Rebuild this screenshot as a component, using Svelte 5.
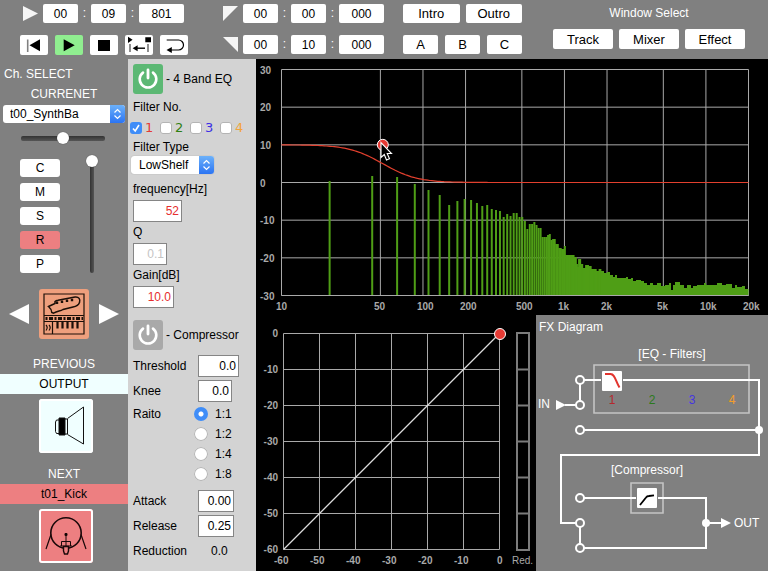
<script>
  let eqOn = $state(true);
  let compOn = $state(false);
  let ratio = $state('1:1');

  const filters = [
    { n: 1, color: '#e53a34', dim: '#b5282c', on: true },
    { n: 2, color: '#2f8012', dim: '#2c7a1c', on: false },
    { n: 3, color: '#3c2fe6', dim: '#4636e0', on: false },
    { n: 4, color: '#f2a43a', dim: '#f29d2a', on: false }
  ];
  const channelKeys = ['C', 'M', 'S', 'R', 'P'];
  const ratios = ['1:1', '1:2', '1:4', '1:8'];

  // EQ plot geometry: logarithmic frequency axis, linear dB axis
  const L = 25.5, R = 492.5, T = 10.5, B = 236.5;
  const fx = (f) => L + ((R - L) * Math.log10(f / 10)) / Math.log10(2000);
  const dy = (db) => T + ((30 - db) * (B - T)) / 60;
  const freqs = [
    [10, '10'], [50, '50'], [100, '100'], [200, '200'], [500, '500'],
    [1000, '1k'], [2000, '2k'], [5000, '5k'], [10000, '10k'], [20000, '20k']
  ];
  const dbs = [30, 20, 10, 0, -10, -20, -30];

  // Low shelf response
  function shelf(f, f0 = 52, gain = 10) {
    const A = Math.pow(10, gain / 40);
    const w = f / f0;
    const m = Math.pow((Math.sqrt(A) / 0.7071) * w, 2);
    const num = Math.pow(A - w * w, 2) + m;
    const den = Math.pow(1 - A * w * w, 2) + m;
    return 20 * Math.log10(A) + 10 * Math.log10(num / den);
  }
  let curve = '';
  for (let i = 0; i <= 230; i++) {
    const f = 10 * Math.pow(2000, i / 230);
    curve += (i ? 'L' : 'M') + fx(f).toFixed(1) + ' ' + dy(shelf(f)).toFixed(1);
  }

  // Spectrum: the first bins one by one, then an envelope of [x, top]
  const low = [122, 117, 118, 125, 131, 136, 146, 142, 140, 141, 144, 147, 146, 150, 151, 152, 158, 155, 157, 154, 154, 158];
  const envelope = [
    [263, 158], [266, 158], [268, 162], [271, 170], [273, 165], [276, 165], [278, 163], [280, 166], [283, 169],
    [286, 178], [289, 178], [291, 176], [293, 175], [295, 181], [298, 180], [300, 185], [303, 189], [306, 190],
    [308, 187], [311, 196], [316, 196], [318, 198], [320, 205], [321, 208], [323, 200], [325, 205], [328, 209],
    [330, 206], [333, 207], [336, 210], [338, 210], [341, 212], [343, 210], [347, 212], [350, 214], [353, 213],
    [356, 216], [358, 218], [360, 216], [364, 219], [369, 219], [371, 218], [374, 220], [376, 219], [379, 222],
    [384, 221], [387, 222], [390, 224], [393, 226], [396, 224], [400, 226], [404, 224], [408, 227], [412, 226],
    [414, 224], [416, 231], [418, 226], [423, 223], [427, 226], [430, 229], [434, 226], [436, 229], [440, 227],
    [444, 226], [447, 226], [449, 224], [452, 226], [457, 226], [460, 226], [465, 224], [469, 226], [475, 225],
    [478, 229], [480, 226], [485, 228], [488, 227], [491, 230], [494, 230]
  ];
  const bars = [];
  for (let k = 1; ; k++) {
    const x = fx(21.53 * k);
    if (x > 345) break;
    const e = envelope.find((p) => p[0] >= x - 1);
    bars.push([x, k <= low.length ? low[k - 1] : e[1]]);
  }
  let dense = `M345 ${B}`;
  for (const [x, t] of envelope) {
    if (x < 345) continue;
    dense += `V${t}H${Math.min(x + 1, R)}`;
  }
  dense += `V${B}Z`;

  const steps = [0, 1, 2, 3, 4, 5, 6];
</script>

{#snippet time(name, parts)}
  <div class="time">
    {#each parts as p, i}
      {#if i}<span>:</span>{/if}
      <input type="text" class:wide={i === 2} value={p} aria-label={`${name} ${i + 1}`} />
    {/each}
  </div>
{/snippet}

{#snippet cap()}
  <svg class="cap" width="15" height="18" viewBox="0 0 15 18" aria-hidden="true">
    <defs>
      <linearGradient id="blue" x1="0" y1="0" x2="0" y2="1">
        <stop offset="0" stop-color="#6cb1fa" />
        <stop offset="1" stop-color="#2b74f3" />
      </linearGradient>
    </defs>
    <path d="M0 0H12a3 3 0 0 1 3 3V15a3 3 0 0 1-3 3H0Z" fill="url(#blue)" />
    <path d="M4.500 7.500 7.500 4.500 10.500 7.500M4.500 10.500 7.500 13.500 10.500 10.500" fill="none" stroke="#fff" stroke-width="1.200" />
  </svg>
{/snippet}

{#snippet power()}
  <svg width="30" height="30" viewBox="0 0 30 30" aria-hidden="true">
    <path d="M10 8.600A8.300 8.300 0 1 0 20 8.600" fill="none" stroke="#fff" stroke-width="2.600" stroke-linecap="round" />
    <path d="M15 6V14" stroke="#fff" stroke-width="2.800" stroke-linecap="round" />
  </svg>
{/snippet}

<div class="app">
  <header>
    <section class="group transport">
      <div class="row">
        <svg class="lead" width="15" height="15" viewBox="0 0 15 15" aria-hidden="true"><path d="M0 0 15 7.500 0 15Z" fill="#f5f5f5" /></svg>
        {@render time('Position', ['00', '09', '801'])}
      </div>
      <div class="row keys">
        <button aria-label="Rewind">
          <svg width="28" height="20" viewBox="0 0 28 20"><path d="M7.700 4.500V17" stroke="#808080" stroke-width="1.600" /><path d="M20 4.300V16.300L9.500 10.300Z" /></svg>
        </button>
        <button class="playing" aria-label="Play">
          <svg width="28" height="20" viewBox="0 0 28 20"><path d="M8.700 4.300 19.700 10.300 8.700 16.300Z" /></svg>
        </button>
        <button aria-label="Stop">
          <svg width="28" height="20" viewBox="0 0 28 20"><path d="M8 5H20V16H8Z" /></svg>
        </button>
        <button aria-label="Return to start">
          <svg width="28" height="20" viewBox="0 0 28 20">
            <path d="M3 1.800 7.600 4.800 3 8ZM20.300 2.300H26V7.300H20.300Z" />
            <path d="M5 9V17M23 9V17" stroke="#606060" stroke-width="1.400" />
            <path d="M11 13.200H20" stroke="#000" stroke-width="1.400" /><path d="M7.600 13.200 12.600 10.200V16.200Z" />
          </svg>
        </button>
        <button aria-label="Loop">
          <svg width="28" height="20" viewBox="0 0 28 20">
            <path d="M6.700 5H18.500A5 5 0 0 1 18.500 15H10" fill="none" stroke="#000" stroke-width="1.200" /><path d="M6.500 15 11.800 12V18Z" />
          </svg>
        </button>
      </div>
    </section>

    <section class="group range">
      <div class="row">
        <svg width="15" height="15" viewBox="0 0 15 15" aria-hidden="true"><path d="M0 0H15L0 15Z" fill="#f5f5f5" /></svg>
        {@render time('Start', ['00', '00', '000'])}
      </div>
      <div class="row">
        <svg width="15" height="15" viewBox="0 0 15 15" aria-hidden="true"><path d="M0 0H15V15Z" fill="#f5f5f5" /></svg>
        {@render time('End', ['00', '10', '000'])}
      </div>
    </section>

    <section class="group marks">
      <div class="row two"><button>Intro</button><button>Outro</button></div>
      <div class="row three"><button>A</button><button>B</button><button>C</button></div>
    </section>

    <section class="windows">
      <h2>Window Select</h2>
      <nav><button>Track</button><button>Mixer</button><button>Effect</button></nav>
    </section>
  </header>

  <main>
    <aside class="channel">
      <h2>Ch. SELECT</h2>
      <label class="current" for="ch">CURRENET</label>
      <div class="select ch">
        <select id="ch"><option>t00_SynthBa</option></select>
        {@render cap()}
      </div>
      <input class="pan" type="range" min="0" max="100" value="50" aria-label="Pan" />
      <div class="strip">
        <div class="letters">
          {#each channelKeys as k}
            <button class:rec={k === 'R'}>{k}</button>
          {/each}
        </div>
        <input class="fader" type="range" min="0" max="100" value="100" aria-label="Volume" />
      </div>
      <div class="picker">
        <button class="arrow" aria-label="Previous channel"><svg width="20" height="20" viewBox="0 0 20 20"><path d="M20 0V20L0 10Z" fill="#fff" /></svg></button>
        <button class="synth" aria-label="Channel icon">
          <svg width="50" height="50" viewBox="0 0 50 50" fill="none" stroke="#1c0f08" stroke-width="1.200">
            <path d="M5 5H45V45H5ZM5 26.500H45M5 32.500H45M13.500 32.500V45" />
            <path d="M9.500 17.500L16 14.500V12.500Q17 11.500 19 11.200L36 8C40 7.500 41.500 10.500 40.500 13.500C39.500 16.500 37 17.500 34 18L24 20.500C21 22.500 19 21.500 14.500 24.200L12.800 23.500Q12.500 20 9.500 17.500Z" stroke-width="1.500" />
            <path d="M18 12.500V15M23 11.500V14M28 10.500V13M33 9.800V12.300" stroke-width="2.400" />
            <path d="M6.500 29.500H44" stroke-width="3" stroke-dasharray="2 1.500 4 1.500" />
            <path d="M18.500 33V39.500M23.500 33V39.500M28.500 33V39.500M33.500 33V39.500M38.500 33V39.500" stroke-width="2.200" />
            <path d="M7 36C8.500 37.500 8.500 39.500 7 41.500M10 36C11.500 37.500 11.500 39.500 10 41.500" />
          </svg>
        </button>
        <button class="arrow" aria-label="Next channel"><svg width="20" height="20" viewBox="0 0 20 20"><path d="M0 0 20 10 0 20Z" fill="#fff" /></svg></button>
      </div>
      <h3 class="prev">PREVIOUS</h3>
      <p class="band out">OUTPUT</p>
      <button class="tile out" aria-label="Go to OUTPUT">
        <svg width="54" height="54" viewBox="0 0 54 54" fill="none" stroke="#111" stroke-width="1">
          <path d="M20 19H26V36H20Z" fill="#000" />
          <path d="M20 21H17.500L16.500 23V32.500L17.500 34.500H20M26 20H28.500V35H26" />
          <path d="M28.500 19.500 44.500 8V45L28.500 35.500" />
        </svg>
      </button>
      <h3 class="next">NEXT</h3>
      <p class="band kick">t01_Kick</p>
      <button class="tile kick" aria-label="Go to t01_Kick">
        <svg width="54" height="54" viewBox="0 0 54 54" fill="none" stroke="#1a0809" stroke-width="1">
          <circle cx="27" cy="24" r="15.200" stroke-width="1.600" />
          <path d="M12 25.500 7 40M42 25.500 47 40" stroke-width="1.200" />
          <path d="M26 24.500H28V26.500H26Z" fill="#000" />
          <path d="M27 27V37M22.500 32.500H31.500V37M22.500 32.500V37M21 37H33" />
          <path d="M24.500 37.500H29.500V42L28.500 45H25.500L24.500 42Z" stroke-width="1.400" fill="#ed7f81" />
        </svg>
      </button>
    </aside>

    <section class="effects">
      <div class="title">
        <button class:on={eqOn} onclick={() => (eqOn = !eqOn)} aria-label="4 Band EQ power">{@render power()}</button>
        <h2>- 4 Band EQ</h2>
      </div>
      <fieldset class="filters">
        <legend>Filter No.</legend>
        {#each filters as f}
          <label style:color={f.color}><input type="checkbox" checked={f.on} />{f.n}</label>
        {/each}
      </fieldset>
      <label class="type" for="ftype">Filter Type</label>
      <div class="select ft">
        <select id="ftype"><option>LowShelf</option></select>
        {@render cap()}
      </div>
      <div class="stack">
        <label for="freq">frequency[Hz]</label>
        <input id="freq" class="num w49 red" type="text" value="52" />
        <label for="q">Q</label>
        <input id="q" class="num w34" type="text" value="0.1" disabled />
        <label for="gain">Gain[dB]</label>
        <input id="gain" class="num w41 red" type="text" value="10.0" />
      </div>

      <div class="title comp">
        <button class:on={compOn} onclick={() => (compOn = !compOn)} aria-label="Compressor power">{@render power()}</button>
        <h2>- Compressor</h2>
      </div>
      <div class="params">
        <div class="param"><label for="thr">Threshold</label><input id="thr" class="num w41" type="text" value="0.0" /></div>
        <div class="param"><label for="knee">Knee</label><input id="knee" class="num w34" type="text" value="0.0" /></div>
        <div class="ratio" role="radiogroup" aria-labelledby="ratio-name">
          <span id="ratio-name">Raito</span>
          <div>
            {#each ratios as r}
              <label><input type="radio" name="ratio" value={r} bind:group={ratio} />{r}</label>
            {/each}
          </div>
        </div>
        <div class="param"><label for="att">Attack</label><input id="att" class="num w36" type="text" value="0.00" /></div>
        <div class="param"><label for="rel">Release</label><input id="rel" class="num w36" type="text" value="0.25" /></div>
        <div class="param"><span>Reduction</span><output>0.0</output></div>
      </div>
    </section>

    <section class="graphs">
      <svg class="eq" viewBox="0 0 512 256" role="img" aria-label="Equalizer response">
        <g stroke="#a9a9a9">
          {#each dbs as d}<path d={`M${L} ${dy(d)}H${R}`} />{/each}
          {#each freqs as [f]}<path d={`M${fx(f)} ${T}V${B}`} />{/each}
        </g>
        <g fill="#4f9e16">
          {#each bars as [x, t]}<rect {x} y={t} width="2" height={B - t} />{/each}
          <path d={dense} />
        </g>
        <path d={`M${L} ${B}H${R}`} stroke="#a9a9a9" />
        <path d={curve} fill="none" stroke="#e2402e" stroke-width="1.200" />
        <g class="axis">
          {#each dbs as d}<text x="4" y={Math.round(dy(d)) + 4}>{d}</text>{/each}
          {#each freqs as [f, name]}<text x={Math.round(fx(f) - 6)} y="251">{name}</text>{/each}
        </g>
        <circle cx={fx(52)} cy={dy(10)} r="5.500" fill="#e53a34" stroke="#fff" />
        <path d="M125 83.500V98.500L128.300 95.500 130.500 101 133.500 99.800 131.200 94.500H135.500Z" fill="#000" stroke="#fff" stroke-width="1.100" />
      </svg>
      <div class="lower">
        <svg class="compgraph" viewBox="0 0 280 256" role="img" aria-label="Compressor curve">
          <g stroke="#a9a9a9" fill="none">
            {#each steps as i}
              <path d={`M27.5 ${18.5 + 36 * i}H243.5M${27.5 + 36 * i} 18.5V234.5`} />
            {/each}
            <g stroke="#7c7c7c" stroke-width="2">
              <path d="M261 18H273V235H261Z" />
              {#each [1, 2, 3, 4, 5] as i}<path d={`M261 ${18.5 + 36 * i}H273`} />{/each}
            </g>
          </g>
          <path d="M27.500 234.500 243.500 18.500" stroke="#dcdcdc" stroke-width="1.300" />
          <g class="axis">
            {#each steps as i}
              <text x="22" y={22 + 36 * i} text-anchor="end">{i ? -10 * i : 0}</text>
              <text x={i === 6 ? 241 : 18 + 36 * i} y="249">{i === 6 ? 0 : -60 + 10 * i}</text>
            {/each}
          </g>
          <text class="red-label" x="256" y="249">Red.</text>
          <circle cx="244" cy="19" r="5.500" fill="#e53a34" stroke="#fff" />
        </svg>
        <svg class="fx" viewBox="0 0 232 256" role="img" aria-label="FX Diagram">
          <text x="3" y="16">FX Diagram</text>
          <text x="136" y="43" text-anchor="middle">[EQ - Filters]</text>
          <text x="111" y="159" text-anchor="middle">[Compressor]</text>
          <text x="2" y="93">IN</text>
          <text x="198" y="212">OUT</text>
          <g fill="none" stroke="#c4c4c4" stroke-width="1.600">
            <path d="M58 50H213V98H58Z" />
            <path d="M95 168H127V198H95Z" />
          </g>
          <g fill="none" stroke="#fff" stroke-width="2">
            <path d="M44 65H65M87 65H223V140H25V208H44M44 65V90M29 90H44M44 115H223" />
            <path d="M44 183H100M122 183H170V233H44V208M170 208H186" />
            <g fill="#808080">
              {#each [65, 90, 115, 183, 208, 233] as y}<circle cx="44" cy={y} r="4" />{/each}
            </g>
          </g>
          <g fill="#fff">
            <circle cx="223" cy="115" r="4" /><circle cx="170" cy="208" r="4" />
            <path d="M20 85 30 90 20 95ZM185 203 195 208 185 213Z" />
            <rect x="66" y="56" width="20" height="20" rx="1" />
            <rect x="101" y="173" width="20" height="20" rx="1" />
          </g>
          <path d="M69 59H74.500C79 59 79.500 66 83.500 72.500" fill="none" stroke="#e2352f" stroke-width="2" />
          <path d="M104 190 110 182.500Q111 181 113 181L118 180.300" fill="none" stroke="#000" stroke-width="1.800" />
          {#each filters as f, i}
            <text x={76 + 40 * i} y="89" text-anchor="middle" fill={f.dim}>{f.n}</text>
          {/each}
        </svg>
      </div>
    </section>
  </main>
</div>

<style>
  :global(body) { margin: 0; background: #808080; }
  .app { font: 12px/20px "Liberation Sans", Arial, Helvetica, sans-serif; color: #000; min-height: 100vh; display: flex; flex-direction: column; }
  h2, h3, p { margin: 0; font-size: 12px; font-weight: 400; line-height: 20px; }
  button, input, select { font: inherit; color: inherit; margin: 0; padding: 0; border: 0; box-sizing: border-box; }
  button { cursor: pointer; }
  svg { display: block; }

  header { display: flex; align-items: flex-start; background: #808080; padding: 4px 20px; color: #fff; }
  .group { display: flex; flex-direction: column; gap: 12px; }
  .row { display: flex; align-items: center; gap: 5px; height: 19px; }
  .lead { margin-left: 3px; }
  .time { display: flex; align-items: center; }
  .time span { width: 13px; text-align: center; line-height: 19px; }
  .time input { width: 35px; height: 19px; border-radius: 2px; background: #fff; color: #000; text-align: center; }
  .time input.wide { width: 45px; }
  header button { background: #fff; color: #000; border-radius: 2px; font-size: 13px; line-height: 19px; }
  .keys { gap: 7px; height: 20px; }
  .keys button { width: 28px; height: 20px; }
  .keys .playing { background: #90ee90; }
  .range { margin-left: 35px; }
  .marks { margin-left: 19px; width: 119px; }
  .two { gap: 6px; }
  .two button { flex: 1; }
  .three { gap: 7px; }
  .three button { flex: 1; }
  .windows { margin-left: 31px; text-align: center; }
  .windows h2 { line-height: 18px; }
  .windows nav { display: flex; gap: 6px; margin-top: 7px; }
  .windows button { width: 60px; height: 20px; }

  main { flex: 1; display: grid; grid-template-columns: 128px 128px minmax(0, 1fr); background: #000; }

  .select { display: grid; }
  .select select { grid-area: 1 / 1; appearance: none; height: 18px; border-radius: 3px; background: #fff; line-height: 18px; }
  .cap { grid-area: 1 / 1; justify-self: end; pointer-events: none; }

  .channel { background: #808080; color: #fff; padding: 5px 0 8px; display: flex; flex-direction: column; }
  .channel h2 { padding-left: 4px; }
  .channel h3, .current { text-align: center; }
  .channel button { color: #000; border-radius: 3px; }
  .ch { margin: 1px 3px 0; }
  .ch select { color: #000; padding-left: 7px; }
  input[type='range'] { appearance: none; background: none; }
  input[type='range']::-webkit-slider-thumb { appearance: none; width: 12px; height: 12px; border-radius: 50%; background: #fff; box-shadow: 0 0 1px #333; }
  .pan { width: 84px; height: 16px; margin: 7px 0 0 21px; }
  .pan::-webkit-slider-runnable-track { height: 5px; border-radius: 2px; background: linear-gradient(#333, #555); }
  .pan::-webkit-slider-thumb { margin-top: -4px; }
  .strip { display: flex; gap: 24px; padding-left: 20px; margin-top: 9px; }
  .letters { display: flex; flex-direction: column; gap: 6px; padding-top: 4px; }
  .letters button { width: 40px; height: 18px; background: #fff; line-height: 18px; }
  .letters .rec { background: #ed7f81; }
  .fader { writing-mode: vertical-lr; direction: rtl; width: 16px; height: 118px; }
  .fader::-webkit-slider-runnable-track { width: 4px; border-radius: 2px; background: linear-gradient(90deg, #333, #555); }
  .fader::-webkit-slider-thumb { margin-right: -4px; margin-left: -4px; }
  .picker { display: flex; justify-content: center; align-items: center; gap: 10px; margin-top: 16px; }
  .arrow { background: none; }
  .synth { background: #ee9f7d; }
  .prev { margin-top: 15px; }
  .next { margin-top: 11px; }
  .band { text-align: center; color: #000; }
  .out { background: #f0ffff; }
  .kick { background: #ed7f81; }
  .tile { width: 54px; height: 54px; margin: 5px 0 0 39px; box-shadow: inset 0 0 0 2px #fff; }

  .effects { background: #d3d3d3; padding-top: 5px; }
  .title { display: flex; align-items: center; gap: 3px; padding-left: 5px; }
  .title button { background: #a9a9a9; border-radius: 3px; }
  .title .on { background: #5cb874; }
  .title.comp { margin-top: 12px; }
  .filters { border: 0; margin: 3px 0 0; padding: 0 0 0 2px; display: flex; height: 41px; }
  .filters legend { padding: 0 0 0 3px; line-height: 20px; }
  .filters label { display: flex; align-items: center; gap: 3px; width: 30px; height: 21px; font: 13px/21px "DejaVu Sans", Verdana, sans-serif; }
  .filters input { appearance: none; width: 12px; height: 12px; border-radius: 3px; background: #fff; box-shadow: inset 0 0 0 1px #b4b4b4; }
  .filters input:checked { background: #3f8df8 url("data:image/svg+xml,%3Csvg xmlns='http://www.w3.org/2000/svg' viewBox='0 0 12 12'%3E%3Cpath d='M3 6.500 5.200 9 9 3' fill='none' stroke='white' stroke-width='1.600'/%3E%3C/svg%3E"); box-shadow: none; }
  .type { display: block; padding-left: 5px; line-height: 18px; }
  .ft { width: 83px; margin-left: 3px; }
  .ft select { padding-left: 8px; box-shadow: 0 0 1px #888; }
  .stack { display: flex; flex-direction: column; align-items: flex-start; padding: 5px 0 0 5px; }
  .stack label { line-height: 21px; }
  .num { height: 22px; border: 1px solid #858585; background: #fff; text-align: right; padding: 0 2px; }
  .num:disabled { color: #c4c4c4; }
  .red { color: #e62e2e; }
  .w49 { width: 49px; }
  .w41 { width: 41px; }
  .w36 { width: 36px; }
  .w34 { width: 34px; }
  .params { padding: 3px 0 0 5px; }
  .param { display: grid; grid-template-columns: 65px 1fr; align-items: center; justify-items: start; height: 25px; }
  .param output { padding-left: 13px; }
  .ratio { display: grid; grid-template-columns: 61px 1fr; margin: 1px 0 4px; }
  .ratio label { display: flex; align-items: center; gap: 7px; height: 20px; }
  .ratio input { appearance: none; width: 14px; height: 14px; border-radius: 50%; background: #fff; box-shadow: inset 0 0 0 1px #b4b4b4; }
  .ratio input:checked { background: radial-gradient(circle, #fff 2px, #3f8df8 3px); box-shadow: none; }

  .graphs { display: flex; flex-direction: column; }
  .graphs svg { width: 100%; height: auto; }
  .lower { flex: 1; display: grid; grid-template-columns: 280fr 232fr; }
  .lower .fx { background: #808080; height: 100%; }
  .axis { font-size: 10px; font-weight: 700; fill: #a9a9a9; }
  .red-label { font-size: 10px; fill: #a9a9a9; }
  .fx text { font-size: 12px; }
  .fx text:not([fill]) { fill: #fff; }
</style>
